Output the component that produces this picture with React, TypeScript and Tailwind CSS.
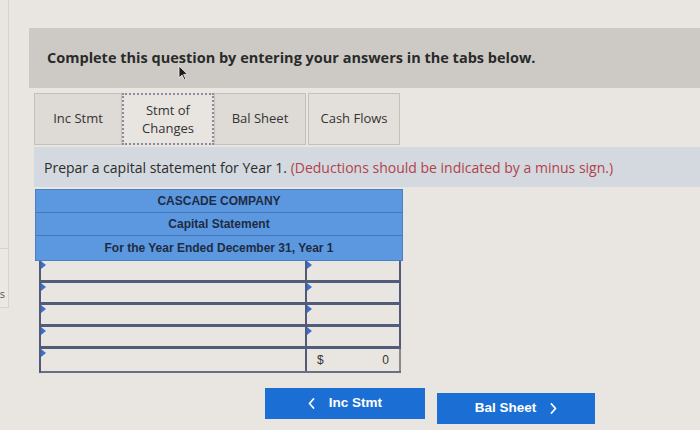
import React from 'react';

const rows = [0, 1, 2, 3];

function Marker() {
  return (
    <span className="absolute left-0 top-0 w-0 h-0 border-y-[4px] border-y-transparent border-l-[5px] border-l-[#3a6fd1]" />
  );
}

function Cursor() {
  return (
    <svg className="absolute left-[178px] top-[65px]" width="11" height="16" viewBox="0 0 11 16">
      <path d="M1 1 L1 13 L4 10 L6.5 15 L8 14.3 L5.6 9.4 L9.6 9.4 Z" fill="#1c1c1c" stroke="#f4f4f4" strokeWidth="0.8" />
    </svg>
  );
}

function Chevron({ dir }: { dir: 'left' | 'right' }) {
  return (
    <svg width="7" height="11" viewBox="0 0 7 11">
      <path
        d={dir === 'left' ? 'M5.5 1 L1.5 5.5 L5.5 10' : 'M1.5 1 L5.5 5.5 L1.5 10'}
        fill="none"
        stroke="white"
        strokeWidth="1.8"
        strokeLinecap="round"
        strokeLinejoin="round"
      />
    </svg>
  );
}

export default function App() {
  return (
    <div className="relative w-[700px] h-[430px] overflow-hidden bg-[#e9e6e1] flex font-['Open_Sans',sans-serif]">
      {/* edge of the neighbouring panel */}
      <div className="w-[9px] flex flex-col">
        <div className="h-[248px] border-r border-[#d6d3ce]" />
        <div className="h-[60px] border-r border-y border-[#d6d3ce] bg-[#ebe8e4] flex items-end justify-end pr-[3px] pb-[6px] text-[11px] leading-[14px] text-[#555]">
          s
        </div>
      </div>

      <div className="flex-1 pl-[20px] pt-[28px]">
        <div className="h-[60px] bg-[#cdcac5] pl-[18px] flex items-center text-[14.5px] font-bold text-[#2a2a2a]">
          Complete this question by entering your answers in the tabs below.
        </div>

        <div className="ml-[5px] mt-[5px] flex h-[52px] text-[13px] text-[#333]">
          <div className="w-[88px] bg-[#dedad5] border border-[#c4c1bc] flex items-center justify-center">Inc Stmt</div>
          <div className="w-[92px] bg-[#e8e5e0] border-2 border-dotted border-[#8a8aa0] flex flex-col items-center justify-center text-center leading-[18px]">
            <span>Stmt of</span>
            <span>Changes</span>
          </div>
          <div className="w-[92px] bg-[#dedad5] border border-[#c4c1bc] flex items-center justify-center">Bal Sheet</div>
          <div className="w-[92px] ml-[2px] bg-[#e3e0db] border border-[#c4c1bc] flex items-center justify-center">Cash Flows</div>
        </div>

        <div className="ml-[5px] mt-[2px] h-[40px] bg-[#d3d9de] pl-[10px] flex items-center text-[14px] text-[#2c2c2c]">
          Prepar a capital statement for Year 1.&nbsp;<span className="text-[#b3424c]">(Deductions should be indicated by a minus sign.)</span>
        </div>

        <div className="ml-[6px] mt-[2px] w-[368px] font-['Liberation_Sans',Arial,sans-serif] text-[12px] font-bold text-[#1f2b44]">
          <div className="bg-[#5b98df] border border-[#4a7fc4]">
            <div className="h-[23px] flex items-center justify-center border-b border-[#4677b8]">CASCADE COMPANY</div>
            <div className="h-[23px] flex items-center justify-center border-b border-[#4677b8]">Capital Statement</div>
            <div className="h-[24px] flex items-center justify-center">For the Year Ended December 31, Year 1</div>
          </div>
          <div className="ml-[4px] mr-[2px] border-l-2 border-[#525a78]">
            {rows.map((r) => (
              <div key={r} className="flex h-[22px] border-b-[3px] border-[#535b7a]">
                <div className="relative flex-1 border-r-2 border-[#525a78]">
                  <Marker />
                </div>
                <div className="relative w-[94px] border-r-2 border-[#525a78]">
                  <Marker />
                </div>
              </div>
            ))}
            <div className="flex h-[24px] border-b-2 border-[#6b6e80]">
              <div className="relative flex-1 border-r-2 border-[#525a78]">
                <Marker />
              </div>
              <div className="w-[94px] border-r-2 border-[#8a8a8a] flex items-center justify-between px-[10px] font-normal text-[12px] text-[#333]">
                <span>$</span>
                <span>0</span>
              </div>
            </div>
          </div>
        </div>

        <div className="mt-[15px] ml-[236px] flex gap-[12px] font-['Liberation_Sans',Arial,sans-serif] text-[13.5px] font-bold text-white">
          <div className="w-[160px] h-[31px] bg-[#1b6fd4] flex items-center justify-center gap-[14px]">
            <Chevron dir="left" />
            <span>Inc Stmt</span>
          </div>
          <div className="mt-[5px] w-[158px] h-[31px] bg-[#1b6fd4] flex items-center justify-center gap-[14px]">
            <span>Bal Sheet</span>
            <Chevron dir="right" />
          </div>
        </div>
      </div>

      <Cursor />
    </div>
  );
}
